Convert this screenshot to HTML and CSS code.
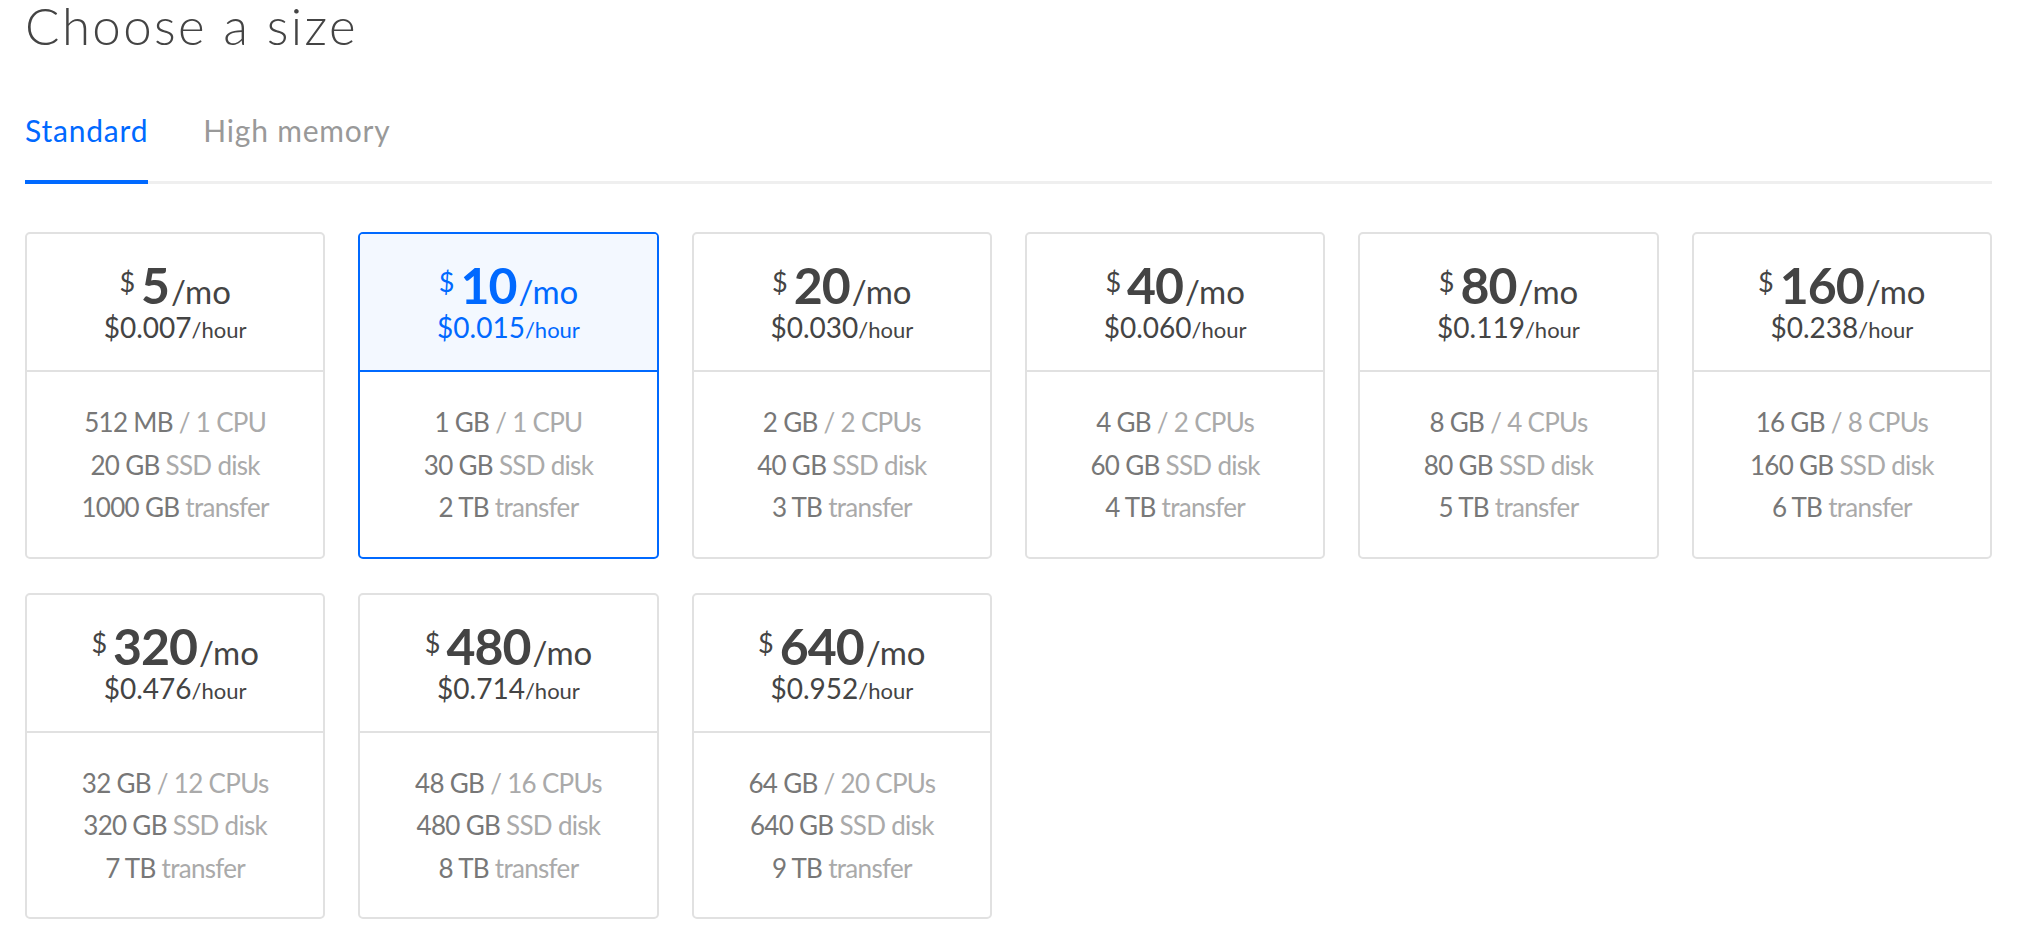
FILE: index.html
```html
<!DOCTYPE html>
<html>
<head>
<meta charset="utf-8">
<link rel="stylesheet" href="styles.css">
</head>
<body>
<div class="page">
  <h1 class="title">Choose a size</h1>
  <div class="tabs">
    <div class="tab active">Standard</div>
    <div class="tab">High memory</div>
  </div>
  <div class="grid">
    <div class="card">
      <div class="card-head">
        <div class="price"><span class="cur">$</span><span class="amt">5</span><span class="per">/mo</span></div>
        <div class="hourly">$0.007<span class="per-h">/hour</span></div>
      </div>
      <div class="card-body">
        <div>512 MB <span class="dim">/ 1 CPU</span></div>
        <div>20 GB <span class="dim">SSD disk</span></div>
        <div>1000 GB <span class="dim">transfer</span></div>
      </div>
    </div>
    <div class="card selected">
      <div class="card-head">
        <div class="price"><span class="cur">$</span><span class="amt">10</span><span class="per">/mo</span></div>
        <div class="hourly">$0.015<span class="per-h">/hour</span></div>
      </div>
      <div class="card-body">
        <div>1 GB <span class="dim">/ 1 CPU</span></div>
        <div>30 GB <span class="dim">SSD disk</span></div>
        <div>2 TB <span class="dim">transfer</span></div>
      </div>
    </div>
    <div class="card">
      <div class="card-head">
        <div class="price"><span class="cur">$</span><span class="amt">20</span><span class="per">/mo</span></div>
        <div class="hourly">$0.030<span class="per-h">/hour</span></div>
      </div>
      <div class="card-body">
        <div>2 GB <span class="dim">/ 2 CPUs</span></div>
        <div>40 GB <span class="dim">SSD disk</span></div>
        <div>3 TB <span class="dim">transfer</span></div>
      </div>
    </div>
    <div class="card">
      <div class="card-head">
        <div class="price"><span class="cur">$</span><span class="amt">40</span><span class="per">/mo</span></div>
        <div class="hourly">$0.060<span class="per-h">/hour</span></div>
      </div>
      <div class="card-body">
        <div>4 GB <span class="dim">/ 2 CPUs</span></div>
        <div>60 GB <span class="dim">SSD disk</span></div>
        <div>4 TB <span class="dim">transfer</span></div>
      </div>
    </div>
    <div class="card">
      <div class="card-head">
        <div class="price"><span class="cur">$</span><span class="amt">80</span><span class="per">/mo</span></div>
        <div class="hourly">$0.119<span class="per-h">/hour</span></div>
      </div>
      <div class="card-body">
        <div>8 GB <span class="dim">/ 4 CPUs</span></div>
        <div>80 GB <span class="dim">SSD disk</span></div>
        <div>5 TB <span class="dim">transfer</span></div>
      </div>
    </div>
    <div class="card">
      <div class="card-head">
        <div class="price"><span class="cur">$</span><span class="amt">160</span><span class="per">/mo</span></div>
        <div class="hourly">$0.238<span class="per-h">/hour</span></div>
      </div>
      <div class="card-body">
        <div>16 GB <span class="dim">/ 8 CPUs</span></div>
        <div>160 GB <span class="dim">SSD disk</span></div>
        <div>6 TB <span class="dim">transfer</span></div>
      </div>
    </div>
    <div class="card">
      <div class="card-head">
        <div class="price"><span class="cur">$</span><span class="amt">320</span><span class="per">/mo</span></div>
        <div class="hourly">$0.476<span class="per-h">/hour</span></div>
      </div>
      <div class="card-body">
        <div>32 GB <span class="dim">/ 12 CPUs</span></div>
        <div>320 GB <span class="dim">SSD disk</span></div>
        <div>7 TB <span class="dim">transfer</span></div>
      </div>
    </div>
    <div class="card">
      <div class="card-head">
        <div class="price"><span class="cur">$</span><span class="amt">480</span><span class="per">/mo</span></div>
        <div class="hourly">$0.714<span class="per-h">/hour</span></div>
      </div>
      <div class="card-body">
        <div>48 GB <span class="dim">/ 16 CPUs</span></div>
        <div>480 GB <span class="dim">SSD disk</span></div>
        <div>8 TB <span class="dim">transfer</span></div>
      </div>
    </div>
    <div class="card">
      <div class="card-head">
        <div class="price"><span class="cur">$</span><span class="amt">640</span><span class="per">/mo</span></div>
        <div class="hourly">$0.952<span class="per-h">/hour</span></div>
      </div>
      <div class="card-body">
        <div>64 GB <span class="dim">/ 20 CPUs</span></div>
        <div>640 GB <span class="dim">SSD disk</span></div>
        <div>9 TB <span class="dim">transfer</span></div>
      </div>
    </div>
  </div>
</div>
</body>
</html>
```
FILE: styles.css
```css
html, body {
  margin: 0;
  padding: 0;
  background: #ffffff;
}
body {
  font-family: "Lato", "Open Sans", sans-serif;
  color: #444444;
}
.page {
  width: 1967px;
  margin-left: 25px;
}
.title {
  margin: 0;
  font-size: 51px;
  line-height: 52px;
  letter-spacing: 2.4px;
  font-weight: 300;
  color: #444444;
}
.tabs {
  display: flex;
  gap: 55px;
  margin-top: 60px;
  border-bottom: 3px solid #efefef;
}
.tab {
  font-size: 30px;
  line-height: 36px;
  letter-spacing: 0.8px;
  padding-bottom: 32px;
  color: #999999;
}
.tab.active {
  color: #0069ff;
  border-bottom: 4px solid #0069ff;
  margin-bottom: -3px;
}
.grid {
  display: grid;
  grid-template-columns: repeat(6, 1fr);
  column-gap: 33px;
  row-gap: 34px;
  margin-top: 48px;
}
.card {
  border: 2px solid #e1e1e1;
  border-radius: 5px;
  text-align: center;
  background: #ffffff;
}
.card-head {
  padding: 26px 0 26px;
  border-bottom: 2px solid #e1e1e1;
}
.price {
  font-size: 50px;
  line-height: 50px;
  color: #444444;
}
.cur {
  font-size: 27px;
  line-height: 1;
  vertical-align: 12px;
  margin-right: 6px;
}
.amt {
  font-weight: 700;
  letter-spacing: -1px;
}
.per {
  font-size: 33px;
  line-height: 1;
  margin-left: 2px;
}
.hourly {
  font-size: 28px;
  line-height: 34px;
  color: #444444;
}
.per-h {
  font-size: 22px;
  line-height: 1;
}
.card-body {
  padding: 29px 0 28px;
  font-size: 26px;
  letter-spacing: -0.7px;
  line-height: 42.5px;
  color: #777777;
}
.dim {
  color: #aaaaaa;
}
.card.selected {
  border-color: #0069ff;
}
.card.selected .card-head {
  background: #f3f8ff;
  border-bottom-color: #0069ff;
  border-radius: 3px 3px 0 0;
}
.card.selected .price,
.card.selected .hourly {
  color: #0069ff;
}
```
